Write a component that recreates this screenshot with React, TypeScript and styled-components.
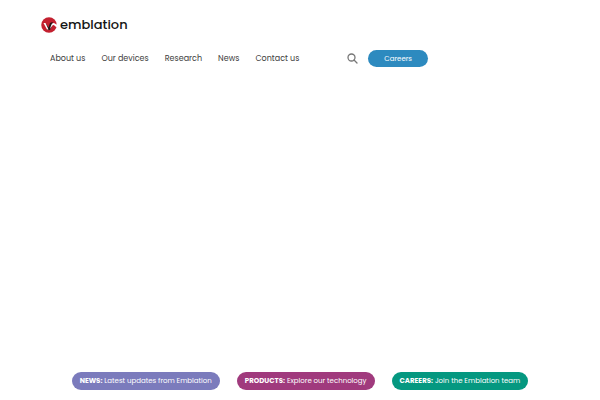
import React from "react";
import styled, { createGlobalStyle } from "styled-components";

const GlobalStyle = createGlobalStyle`
  * { box-sizing: border-box; }
  body {
    margin: 0;
    background: #fff;
    font-family: Poppins, Inter, sans-serif;
  }
`;

const Page = styled.div`
  display: flex;
  flex-direction: column;
  min-height: 100vh;
`;

const Header = styled.header`
  padding: 16px 41px 0;
`;

const Brand = styled.a`
  display: flex;
  align-items: center;
  gap: 3px;
  width: max-content;
  color: #151515;
  font-size: 13px;
  font-weight: 500;
  line-height: 18px;
  text-decoration: none;
`;

const Mark = styled.svg`
  width: 16px;
  height: 16px;
`;

const NavBar = styled.nav`
  display: flex;
  align-items: center;
  margin-top: 16px;
  padding-left: 9px;
`;

const NavList = styled.ul`
  display: flex;
  gap: 16px;
  margin: 0;
  padding: 0;
  list-style: none;
`;

const NavLink = styled.a`
  display: block;
  color: #404040;
  font-size: 8px;
  line-height: 17px;
  text-decoration: none;
  white-space: nowrap;
`;

const SearchButton = styled.button`
  display: flex;
  margin: 0 10px 0 48px;
  padding: 0;
  border: 0;
  background: none;
  color: #777;
`;

const SearchIcon = styled.svg`
  width: 11px;
  height: 11px;
`;

const CareersLink = styled.a`
  padding: 0 16px;
  border-radius: 9px;
  background: #2d8abf;
  color: #fff;
  font-size: 7px;
  line-height: 17px;
  text-decoration: none;
`;

const Hero = styled.main`
  flex: 1;
`;

const Promos = styled.footer`
  display: flex;
  flex-wrap: wrap;
  justify-content: center;
  gap: 17px;
  padding-bottom: 10px;
`;

const Promo = styled.a<{ $color: string }>`
  padding: 0 8px;
  border-radius: 9px;
  background: ${(p) => p.$color};
  color: #fff;
  font-size: 7px;
  line-height: 18px;
  text-decoration: none;
  white-space: nowrap;
`;

const links = ["About us", "Our devices", "Research", "News", "Contact us"];

const promos = [
  { label: "NEWS:", text: "Latest updates from Emblation", color: "#7b7bbc" },
  { label: "PRODUCTS:", text: "Explore our technology", color: "#a03a7d" },
  { label: "CAREERS:", text: "Join the Emblation team", color: "#059880" },
];

export default function App() {
  return (
    <Page>
      <GlobalStyle />
      <Header>
        <Brand href="#">
          <Mark viewBox="0 0 32 32" aria-hidden="true">
            <circle cx="16" cy="16" r="15.5" fill="#c3202f" />
            <path d="M9 12l6 9 3-9 5-2 1 4-6 12h-5z" fill="#281416" />
            <path d="M5 12h4l6 13h-3z" fill="#fff" />
            <path d="M18 24c2-6 3-12 7-12 3 0 4 3 7 3v5c-4 0-5-4-7-4-2 0-4 4-7 8z" fill="#fff" />
          </Mark>
          emblation
        </Brand>
        <NavBar aria-label="Main">
          <NavList>
            {links.map((link) => (
              <li key={link}>
                <NavLink href="#">{link}</NavLink>
              </li>
            ))}
          </NavList>
          <SearchButton type="button" aria-label="Search">
            <SearchIcon viewBox="0 0 22 22" fill="none" stroke="currentColor" strokeWidth="2.6">
              <circle cx="9" cy="9" r="7" />
              <path d="M14 14l6 6" strokeLinecap="round" />
            </SearchIcon>
          </SearchButton>
          <CareersLink href="#">Careers</CareersLink>
        </NavBar>
      </Header>
      <Hero />
      <Promos>
        {promos.map((p) => (
          <Promo key={p.label} href="#" $color={p.color}>
            <strong>{p.label}</strong> {p.text}
          </Promo>
        ))}
      </Promos>
    </Page>
  );
}
